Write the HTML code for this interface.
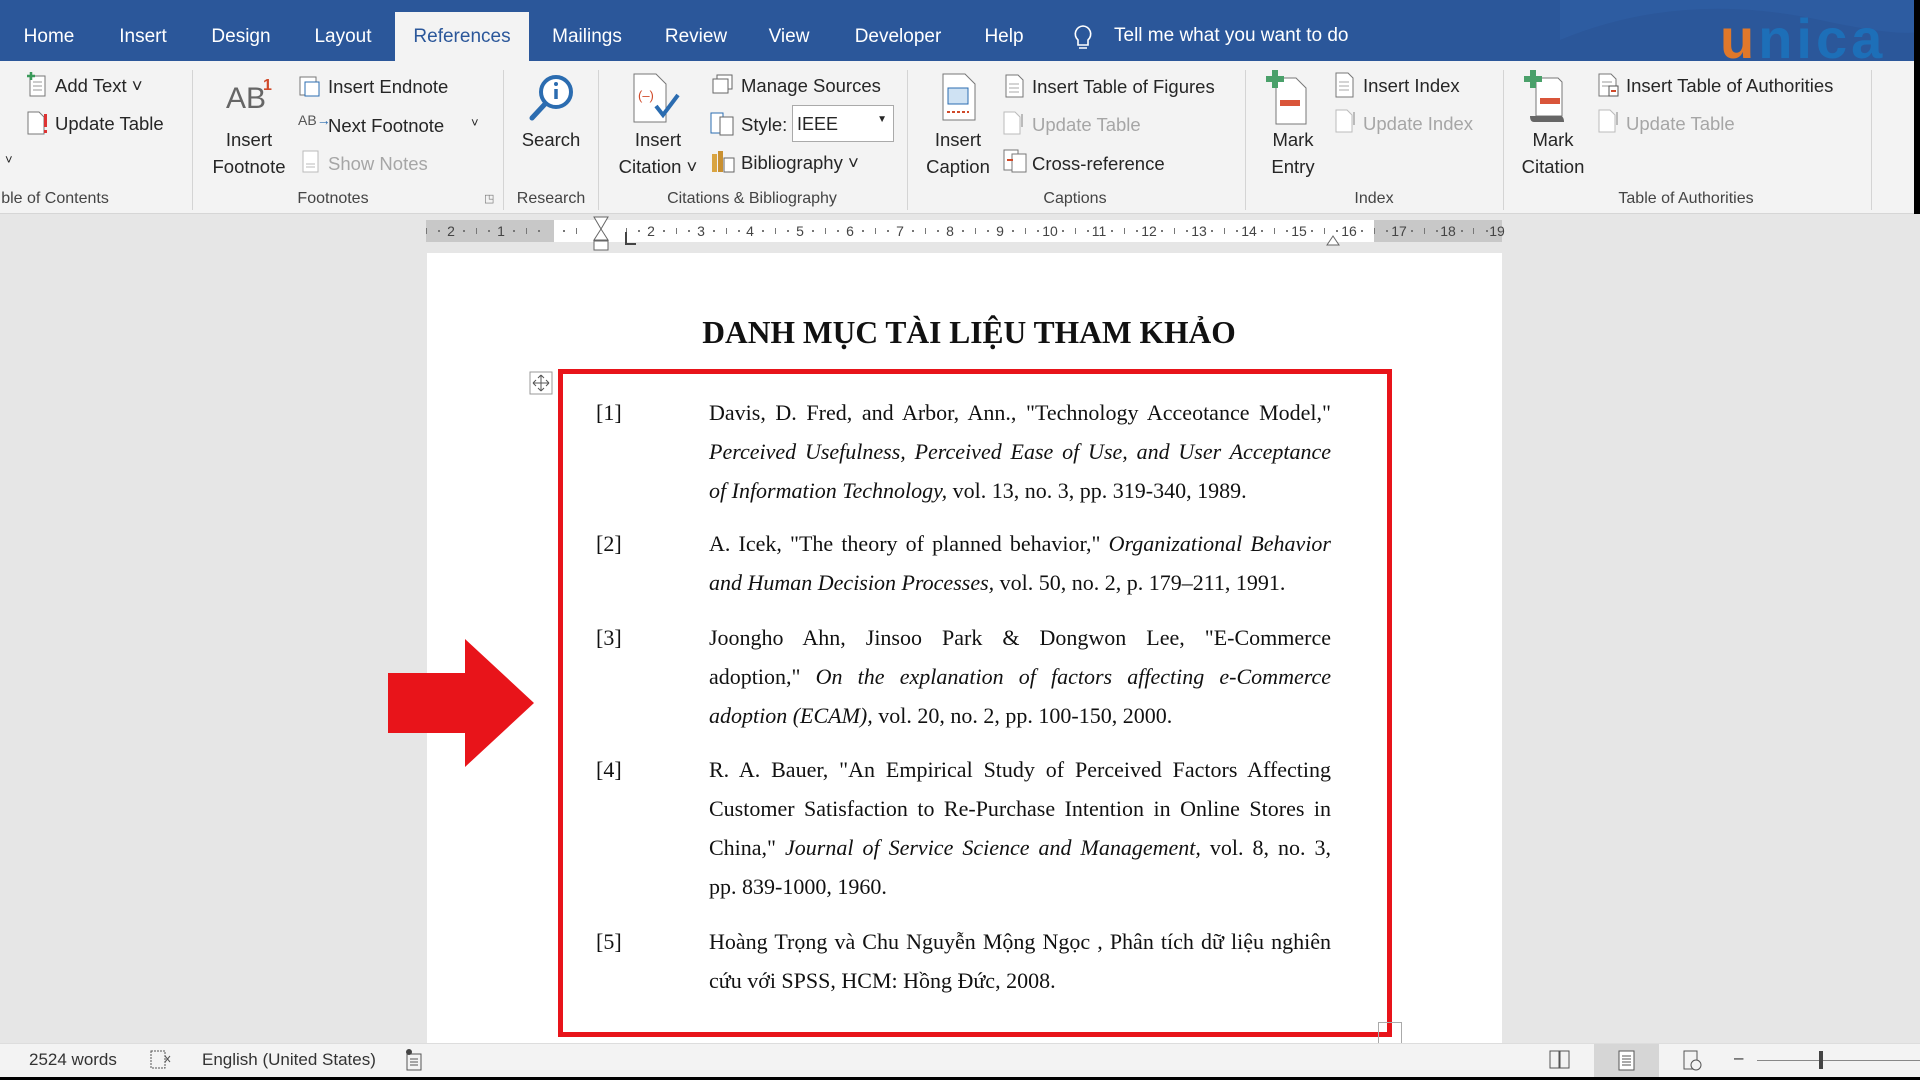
<!DOCTYPE html>
<html><head><meta charset="utf-8"><style>
*{margin:0;padding:0;box-sizing:border-box}
body{width:1920px;height:1080px;overflow:hidden;background:#e6e6e6;font-family:"Liberation Sans",sans-serif;position:relative;color:#262626}
.a{position:absolute;white-space:nowrap}
.tabs{position:absolute;left:0;top:0;width:1920px;height:61px;background:#2b579a}
.tab{position:absolute;top:26px;color:#fff;font-size:19px;transform:translateX(-50%)}
.rib{position:absolute;left:0;top:61px;width:1920px;height:153px;background:#f3f3f3;border-bottom:1px solid #d6d6d6}
.r{position:absolute;font-size:18.5px;white-space:nowrap;color:#262626}
.g{color:#a6a6a6}
.c{transform:translateX(-50%);text-align:center}
.lbl{position:absolute;top:190px;font-size:16px;transform:translateX(-50%);white-space:nowrap;color:#444}
.sep{position:absolute;top:70px;width:1px;height:140px;background:#d4d4d4}
.ic{position:absolute}
.page{position:absolute;left:427px;top:253px;width:1075px;height:790px;background:#fff}
.ln{position:absolute;left:709px;width:622px;font-family:"Liberation Serif",serif;font-size:22px;white-space:nowrap;text-align:justify;text-align-last:justify;color:#111}
.ln.e{text-align-last:left}
.num{position:absolute;left:596px;font-family:"Liberation Serif",serif;font-size:22px;color:#111}
.status{position:absolute;left:0;top:1043px;width:1920px;height:34px;background:#f3f3f3;border-top:1px solid #ddd}
.st{position:absolute;top:1050px;font-size:17px;color:#333}
.rn{position:absolute;top:223px;font-size:14px;color:#444;transform:translateX(-50%)}
.tk{position:absolute;top:228px;width:1px;height:6px;background:#777}
.dt{position:absolute;top:230px;width:2px;height:2px;background:#777}
</style></head><body>
<div class="tabs">
<div class="a" style="left:395px;top:12px;width:134px;height:49px;background:#f3f3f3"></div>
<svg class="ic" style="left:1560px;top:0" width="360" height="61"><path d="M0 40 Q120 -10 260 20 T360 10 V0 H0Z" fill="#2f5fa6" opacity=".6"/></svg>
<span class="tab" style="left:49px">Home</span>
<span class="tab" style="left:143px">Insert</span>
<span class="tab" style="left:241px">Design</span>
<span class="tab" style="left:343px">Layout</span>
<span class="tab" style="left:462px;color:#2b579a">References</span>
<span class="tab" style="left:587px">Mailings</span>
<span class="tab" style="left:696px">Review</span>
<span class="tab" style="left:789px">View</span>
<span class="tab" style="left:898px">Developer</span>
<span class="tab" style="left:1004px">Help</span>
<svg class="ic" style="left:1072px;top:24px" width="22" height="28"><path d="M11 2a8 8 0 0 0-5 14v5h10v-5a8 8 0 0 0-5-14zM7 24h8" fill="none" stroke="#fff" stroke-width="1.6"/></svg>
<span class="a" style="left:1114px;top:25px;color:#fff;font-size:19px">Tell me what you want to do</span>
<span class="a" style="left:1720px;top:6px;font-size:56px;font-weight:bold;color:#1d6fb8;letter-spacing:4px"><span style="color:#e0782a">u</span>nica</span>
<div class="a" style="left:1914px;top:0;width:6px;height:61px;background:#000"></div>
</div>
<div class="rib">
<div class="a" style="left:1914px;top:0;width:6px;height:153px;background:#000"></div>
</div>
<!-- TOC -->
<svg class="ic" style="left:26px;top:72px" width="22" height="26"><rect x="4" y="4" width="15" height="20" fill="#fff" stroke="#777"/><path d="M7 10h9M7 14h9M7 18h9" stroke="#999"/><path d="M5 0v8M1 4h8" stroke="#3a9a5a" stroke-width="2.5"/></svg>
<span class="r" style="left:55px;top:75px">Add Text ˅</span>
<svg class="ic" style="left:26px;top:110px" width="24" height="26"><path d="M2 2h11l5 5v17H2z" fill="#fff" stroke="#777"/><rect x="18" y="4" width="3" height="13" fill="#d33"/><rect x="18" y="20" width="3" height="3" fill="#d33"/></svg>
<span class="r" style="left:55px;top:113px">Update Table</span>
<span class="r" style="left:5px;top:152px;font-size:13px">˅</span>
<span class="lbl" style="left:55px">ble of Contents</span>
<div class="sep" style="left:192px"></div>
<!-- Footnotes -->
<span class="r" style="left:226px;top:82px;font-size:30px;color:#666">AB</span><span class="r" style="left:263px;top:77px;font-size:16px;color:#d04a2a;font-weight:bold">1</span>
<span class="r c" style="left:249px;top:129px">Insert</span>
<span class="r c" style="left:249px;top:156px">Footnote</span>
<svg class="ic" style="left:298px;top:75px" width="24" height="22"><rect x="2" y="2" width="16" height="18" fill="#fff" stroke="#777"/><rect x="7" y="7" width="14" height="14" fill="#fff" stroke="#2b6cb0"/></svg>
<span class="r" style="left:328px;top:76px">Insert Endnote</span>
<span class="r" style="left:298px;top:112px;font-size:14px;color:#555">AB<span style="color:#2b6cb0">→</span></span>
<span class="r" style="left:328px;top:115px">Next Footnote</span><span class="r" style="left:471px;top:115px;font-size:13px">˅</span>
<svg class="ic" style="left:302px;top:150px" width="18" height="24"><rect x="1" y="1" width="15" height="21" fill="#fff" stroke="#bbb"/><path d="M4 14h9M4 17h9" stroke="#bbb"/></svg>
<span class="r g" style="left:328px;top:153px">Show Notes</span>
<span class="lbl" style="left:333px">Footnotes</span>
<span class="r" style="left:484px;top:192px;font-size:11px;color:#777">◳</span>
<div class="sep" style="left:503px"></div>
<!-- Search -->
<svg class="ic" style="left:526px;top:72px" width="50" height="52"><circle cx="30" cy="20" r="15" fill="#fff" stroke="#2b6cb0" stroke-width="4"/><path d="M19 32L6 46" stroke="#2b6cb0" stroke-width="5" stroke-linecap="round"/><circle cx="30" cy="12" r="2" fill="#2b6cb0"/><path d="M30 17v10" stroke="#2b6cb0" stroke-width="3.5"/></svg>
<span class="r c" style="left:551px;top:129px">Search</span>
<span class="lbl" style="left:551px">Research</span>
<div class="sep" style="left:598px"></div>
<!-- Citation -->
<svg class="ic" style="left:632px;top:72px" width="52" height="52"><path d="M2 2h22l10 10v38H2z" fill="#fff" stroke="#777"/><text x="6" y="28" font-size="13" fill="#d04a2a" font-family="Liberation Sans">(–)</text><path d="M24 34l7 9 15-20" fill="none" stroke="#2b6cb0" stroke-width="4"/></svg>
<span class="r c" style="left:658px;top:129px">Insert</span>
<span class="r c" style="left:658px;top:156px">Citation ˅</span>
<svg class="ic" style="left:711px;top:74px" width="24" height="22"><rect x="6" y="1" width="15" height="14" fill="#fff" stroke="#666"/><rect x="2" y="5" width="15" height="14" fill="#fff" stroke="#666"/></svg>
<span class="r" style="left:741px;top:75px">Manage Sources</span>
<svg class="ic" style="left:710px;top:111px" width="26" height="26"><rect x="1" y="2" width="12" height="20" fill="#fff" stroke="#2b6cb0"/><rect x="10" y="6" width="13" height="18" fill="#fff" stroke="#666"/></svg>
<span class="r" style="left:741px;top:114px">Style:</span>
<div class="a" style="left:792px;top:105px;width:102px;height:37px;background:#fff;border:1px solid #aaa;font-size:18px;padding:8px 4px">IEEE<span style="position:absolute;right:6px;top:8px;font-size:10px">▼</span></div>
<svg class="ic" style="left:710px;top:148px" width="26" height="26"><rect x="2" y="6" width="5" height="18" fill="#d9a441"/><rect x="8" y="3" width="5" height="21" fill="#c99031"/><rect x="14" y="10" width="10" height="14" fill="#fff" stroke="#666"/></svg>
<span class="r" style="left:741px;top:152px">Bibliography ˅</span>
<span class="lbl" style="left:752px">Citations &amp; Bibliography</span>
<div class="sep" style="left:907px"></div>
<!-- Captions -->
<svg class="ic" style="left:941px;top:72px" width="36" height="50"><path d="M2 2h22l10 10v36H2z" fill="#fff" stroke="#777"/><rect x="7" y="16" width="20" height="16" fill="#cfe2f3" stroke="#2b6cb0"/><path d="M6 40h22" stroke="#d04a2a" stroke-dasharray="3 2" stroke-width="2"/></svg>
<span class="r c" style="left:958px;top:129px">Insert</span>
<span class="r c" style="left:958px;top:156px">Caption</span>
<svg class="ic" style="left:1004px;top:73px" width="22" height="26"><path d="M2 2h12l5 5v17H2z" fill="#fff" stroke="#777"/><path d="M5 11h10M5 15h10M5 19h10" stroke="#aaa"/></svg>
<span class="r" style="left:1032px;top:76px">Insert Table of Figures</span>
<svg class="ic" style="left:1002px;top:110px" width="24" height="26"><path d="M2 2h11l5 5v17H2z" fill="#fff" stroke="#bbb"/><rect x="19" y="4" width="2" height="13" fill="#bbb"/></svg>
<span class="r g" style="left:1032px;top:114px">Update Table</span>
<svg class="ic" style="left:1002px;top:148px" width="26" height="26"><rect x="2" y="2" width="14" height="20" fill="#fff" stroke="#777"/><rect x="10" y="6" width="14" height="18" fill="#fff" stroke="#777"/><path d="M5 12h6" stroke="#d04a2a" stroke-width="2"/></svg>
<span class="r" style="left:1032px;top:153px">Cross-reference</span>
<span class="lbl" style="left:1075px">Captions</span>
<div class="sep" style="left:1245px"></div>
<!-- Index -->
<svg class="ic" style="left:1266px;top:70px" width="44" height="56"><path d="M10 8h20l10 10v36H10z" fill="#fff" stroke="#777"/><path d="M6 0v18M-3 9h18" stroke="#4aa06a" stroke-width="6" transform="translate(3 0)"/><rect x="14" y="30" width="20" height="6" fill="#d9553a"/></svg>
<span class="r c" style="left:1293px;top:129px">Mark</span>
<span class="r c" style="left:1293px;top:156px">Entry</span>
<svg class="ic" style="left:1334px;top:71px" width="22" height="28"><path d="M2 2h12l5 5v19H2z" fill="#fff" stroke="#777"/><path d="M5 11h10M5 15h10M5 19h10" stroke="#aaa"/></svg>
<span class="r" style="left:1363px;top:75px">Insert Index</span>
<svg class="ic" style="left:1334px;top:108px" width="24" height="26"><path d="M2 2h11l5 5v17H2z" fill="#fff" stroke="#bbb"/><rect x="19" y="4" width="2" height="13" fill="#bbb"/></svg>
<span class="r g" style="left:1363px;top:113px">Update Index</span>
<span class="lbl" style="left:1374px">Index</span>
<div class="sep" style="left:1503px"></div>
<!-- Authorities -->
<svg class="ic" style="left:1524px;top:70px" width="50" height="58"><path d="M12 8h22l4 4v34H12z" fill="#fff" stroke="#777"/><path d="M6 46h30q4 0 4 6H10q-4 0-4-6z" fill="#666"/><path d="M9 0v18M0 9h18" stroke="#4aa06a" stroke-width="6"/><rect x="16" y="28" width="20" height="6" fill="#d9553a"/></svg>
<span class="r c" style="left:1553px;top:129px">Mark</span>
<span class="r c" style="left:1553px;top:156px">Citation</span>
<svg class="ic" style="left:1597px;top:72px" width="24" height="26"><path d="M2 2h12l5 5v17H2z" fill="#fff" stroke="#777"/><path d="M5 10h10M5 14h10" stroke="#999"/><rect x="12" y="14" width="9" height="10" fill="#fff" stroke="#555"/><path d="M14 19h5" stroke="#d04a2a" stroke-width="2"/></svg>
<span class="r" style="left:1626px;top:75px">Insert Table of Authorities</span>
<svg class="ic" style="left:1597px;top:108px" width="24" height="26"><path d="M2 2h11l5 5v17H2z" fill="#fff" stroke="#bbb"/><rect x="19" y="4" width="2" height="13" fill="#bbb"/></svg>
<span class="r g" style="left:1626px;top:113px">Update Table</span>
<span class="lbl" style="left:1686px">Table of Authorities</span>
<div class="sep" style="left:1871px"></div>
<!-- Ruler -->
<div class="a" style="left:426px;top:220px;width:1076px;height:22px;background:#c8c8c8"></div>
<div class="a" style="left:554px;top:220px;width:820px;height:22px;background:#fff"></div>
<span class="rn" style="left:451px">2</span><span class="rn" style="left:501px">1</span>
<span class="rn" style="left:651px">2</span><span class="rn" style="left:701px">3</span><span class="rn" style="left:750px">4</span><span class="rn" style="left:800px">5</span><span class="rn" style="left:850px">6</span><span class="rn" style="left:900px">7</span><span class="rn" style="left:950px">8</span><span class="rn" style="left:1000px">9</span><span class="rn" style="left:1050px">10</span><span class="rn" style="left:1099px">11</span><span class="rn" style="left:1149px">12</span><span class="rn" style="left:1199px">13</span><span class="rn" style="left:1249px">14</span><span class="rn" style="left:1299px">15</span><span class="rn" style="left:1349px">16</span><span class="rn" style="left:1399px">17</span><span class="rn" style="left:1448px">18</span><span class="rn" style="left:1497px">19</span>
<div class="tk" style="left:426px"></div><div class="tk" style="left:476px"></div><div class="tk" style="left:526px"></div><div class="tk" style="left:576px"></div><div class="tk" style="left:626px"></div><div class="tk" style="left:676px"></div><div class="tk" style="left:726px"></div><div class="tk" style="left:775px"></div><div class="tk" style="left:825px"></div><div class="tk" style="left:875px"></div><div class="tk" style="left:925px"></div><div class="tk" style="left:975px"></div><div class="tk" style="left:1025px"></div><div class="tk" style="left:1075px"></div><div class="tk" style="left:1124px"></div><div class="tk" style="left:1174px"></div><div class="tk" style="left:1224px"></div><div class="tk" style="left:1274px"></div><div class="tk" style="left:1324px"></div><div class="tk" style="left:1374px"></div><div class="tk" style="left:1424px"></div><div class="tk" style="left:1473px"></div>
<div class="dt" style="left:438px"></div><div class="dt" style="left:463px"></div><div class="dt" style="left:488px"></div><div class="dt" style="left:513px"></div><div class="dt" style="left:538px"></div><div class="dt" style="left:563px"></div><div class="dt" style="left:638px"></div><div class="dt" style="left:663px"></div><div class="dt" style="left:688px"></div><div class="dt" style="left:713px"></div><div class="dt" style="left:738px"></div><div class="dt" style="left:762px"></div><div class="dt" style="left:787px"></div><div class="dt" style="left:812px"></div><div class="dt" style="left:837px"></div><div class="dt" style="left:862px"></div><div class="dt" style="left:887px"></div><div class="dt" style="left:912px"></div><div class="dt" style="left:937px"></div><div class="dt" style="left:962px"></div><div class="dt" style="left:987px"></div><div class="dt" style="left:1012px"></div><div class="dt" style="left:1037px"></div><div class="dt" style="left:1062px"></div><div class="dt" style="left:1087px"></div><div class="dt" style="left:1111px"></div><div class="dt" style="left:1136px"></div><div class="dt" style="left:1161px"></div><div class="dt" style="left:1186px"></div><div class="dt" style="left:1211px"></div><div class="dt" style="left:1236px"></div><div class="dt" style="left:1261px"></div><div class="dt" style="left:1286px"></div><div class="dt" style="left:1311px"></div><div class="dt" style="left:1336px"></div><div class="dt" style="left:1361px"></div><div class="dt" style="left:1386px"></div><div class="dt" style="left:1411px"></div><div class="dt" style="left:1436px"></div><div class="dt" style="left:1461px"></div><div class="dt" style="left:1486px"></div>
<svg class="ic" style="left:592px;top:216px" width="18" height="36"><path d="M2 1h14L9 13zM9 13L2 24h14z" fill="#fff" stroke="#666"/><rect x="2" y="25" width="14" height="9" fill="#fff" stroke="#666"/></svg>
<svg class="ic" style="left:624px;top:232px" width="14" height="14"><path d="M2 0v12h10" fill="none" stroke="#444" stroke-width="2"/></svg>
<svg class="ic" style="left:1326px;top:232px" width="14" height="14"><path d="M1 13L7 4l6 9z" fill="#fff" stroke="#666"/></svg>
<!-- Page -->
<div class="page"></div>
<div class="a" style="left:0;top:333px;width:1938px;text-align:center;font-family:'Liberation Serif',serif;font-weight:bold;font-size:31.5px;color:#111;transform:translateY(-50%)">DANH MỤC TÀI LIỆU THAM KHẢO</div>
<svg class="ic" style="left:529px;top:371px" width="24" height="24"><rect x="1" y="1" width="22" height="22" fill="#fff" stroke="#999"/><path d="M12 4v16M4 12h16M12 4l-3 3M12 4l3 3M12 20l-3-3M12 20l3-3M4 12l3-3M4 12l3 3M20 12l-3-3M20 12l-3 3" stroke="#555" fill="none"/></svg>
<div class="a" style="left:558px;top:369px;width:834px;height:668px;border:5px solid #e8141a"></div>
<div class="a" style="left:1378px;top:1022px;width:24px;height:21px;border:1px solid #aaa;border-bottom:none"></div>
<svg class="ic" style="left:388px;top:639px" width="146" height="128"><path d="M0 34H77V0L146 64 77 128V94H0z" fill="#e8141a"/></svg>

<span class="num" style="top:400px">[1]</span>
<div class="ln" style="top:400px">Davis, D. Fred, and Arbor, Ann., "Technology Acceotance Model,"</div>
<div class="ln" style="top:439px"><i>Perceived Usefulness, Perceived Ease of Use, and User Acceptance</i></div>
<div class="ln e" style="top:478px"><i>of Information Technology,</i> vol. 13, no. 3, pp. 319-340, 1989.</div>
<span class="num" style="top:531px">[2]</span>
<div class="ln" style="top:531px">A. Icek, "The theory of planned behavior," <i>Organizational Behavior</i></div>
<div class="ln e" style="top:570px"><i>and Human Decision Processes,</i> vol. 50, no. 2, p. 179–211, 1991.</div>
<span class="num" style="top:625px">[3]</span>
<div class="ln" style="top:625px">Joongho Ahn, Jinsoo Park &amp; Dongwon Lee, "E-Commerce</div>
<div class="ln" style="top:664px">adoption," <i>On the explanation of factors affecting e-Commerce</i></div>
<div class="ln e" style="top:703px"><i>adoption (ECAM),</i> vol. 20, no. 2, pp. 100-150, 2000.</div>
<span class="num" style="top:757px">[4]</span>
<div class="ln" style="top:757px">R. A. Bauer, "An Empirical Study of Perceived Factors Affecting</div>
<div class="ln" style="top:796px">Customer Satisfaction to Re-Purchase Intention in Online Stores in</div>
<div class="ln" style="top:835px">China," <i>Journal of Service Science and Management,</i> vol. 8, no. 3,</div>
<div class="ln e" style="top:874px">pp. 839-1000, 1960.</div>
<span class="num" style="top:929px">[5]</span>
<div class="ln" style="top:929px">Hoàng Trọng và Chu Nguyễn Mộng Ngọc , Phân tích dữ liệu nghiên</div>
<div class="ln e" style="top:968px">cứu với SPSS, HCM: Hồng Đức, 2008.</div>

<!-- Status -->
<div class="status"></div>
<span class="st" style="left:29px">2524 words</span>
<svg class="ic" style="left:150px;top:1050px" width="22" height="20"><rect x="1" y="1" width="14" height="17" fill="none" stroke="#555" stroke-dasharray="2 1"/><path d="M15 6l5 6M20 6l-5 6" stroke="#555"/></svg>
<span class="st" style="left:202px">English (United States)</span>
<svg class="ic" style="left:404px;top:1048px" width="20" height="24"><rect x="3" y="6" width="14" height="16" fill="none" stroke="#555"/><path d="M6 11h8M6 14h8M6 17h8" stroke="#555"/><circle cx="5" cy="4" r="3" fill="#444"/></svg>
<svg class="ic" style="left:1549px;top:1050px" width="22" height="20"><rect x="1" y="1" width="9" height="17" fill="none" stroke="#555"/><rect x="11" y="1" width="9" height="17" fill="none" stroke="#555"/></svg>
<div class="a" style="left:1594px;top:1044px;width:65px;height:33px;background:#d6d6d6"></div>
<svg class="ic" style="left:1617px;top:1050px" width="20" height="22"><rect x="2" y="1" width="15" height="19" fill="#fff" stroke="#555"/><path d="M5 6h9M5 9h9M5 12h9M5 15h9" stroke="#555"/></svg>
<svg class="ic" style="left:1682px;top:1050px" width="22" height="22"><rect x="2" y="1" width="13" height="18" fill="none" stroke="#555"/><circle cx="14" cy="15" r="5" fill="#f3f3f3" stroke="#555"/></svg>
<span class="st" style="left:1734px;top:1048px">–</span>
<div class="a" style="left:1757px;top:1060px;width:163px;height:1px;background:#888"></div>
<div class="a" style="left:1819px;top:1051px;width:4px;height:18px;background:#444"></div>
<div class="a" style="left:0;top:1077px;width:1920px;height:3px;background:#000"></div>
</body></html>
